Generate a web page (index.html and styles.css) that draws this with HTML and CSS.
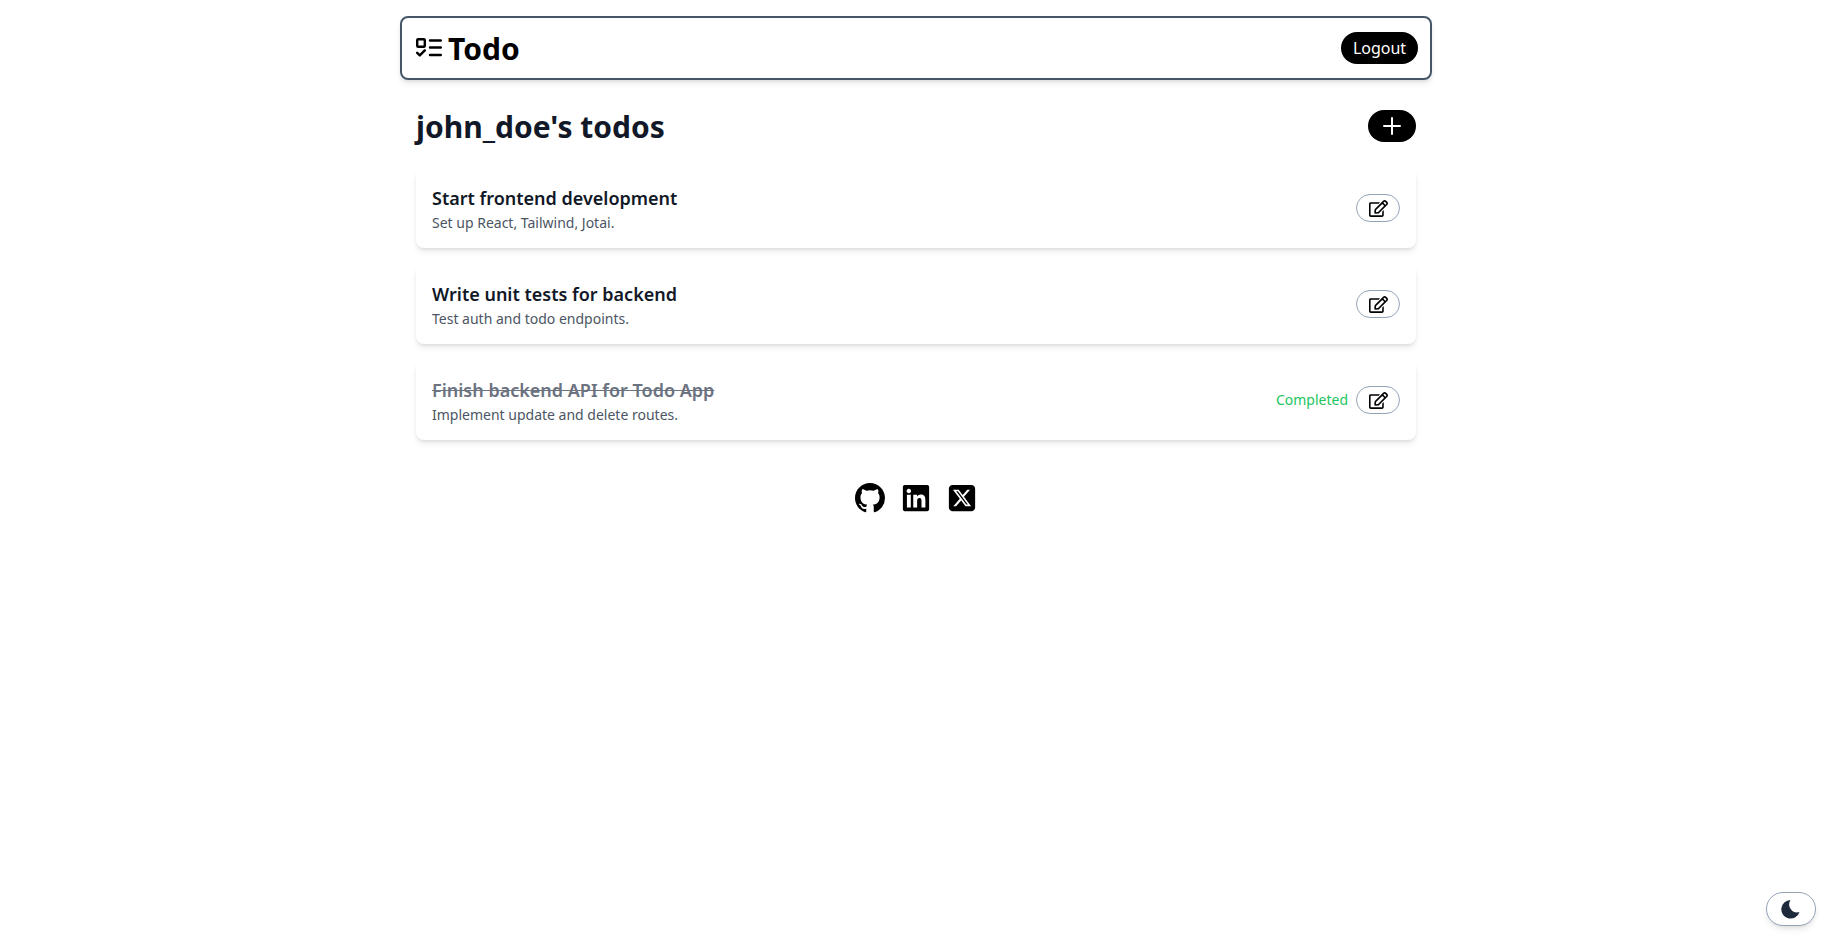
FILE: index.html
```html
<!DOCTYPE html>
<html lang="en">
<head>
<meta charset="utf-8">
<title>Todo</title>
<link rel="stylesheet" href="styles.css">
</head>
<body>
<svg class="sprite" aria-hidden="true"><symbol id="edit" viewBox="0 0 576 512"><path fill="currentColor" d="M402.300 344.900l32-32c5-5 13.700-1.500 13.700 5.700V464c0 26.500-21.500 48-48 48H48c-26.500 0-48-21.500-48-48V112c0-26.500 21.500-48 48-48h273.500c7.100 0 10.700 8.600 5.700 13.700l-32 32c-1.500 1.500-3.500 2.300-5.700 2.300H48v352h352V350.500c0-2.100.8-4.100 2.300-5.600zm156.600-201.800L296.300 405.700l-90.400 10c-26.200 2.900-48.500-19.200-45.600-45.600l10-90.400L432.900 17.100c22.900-22.900 59.900-22.900 82.700 0l43.200 43.200c22.900 22.900 22.900 60 .1 82.800zM460.100 174L402 115.900 216.200 301.800l-7.300 65.300 65.300-7.300L460.100 174zm64.800-79.700l-43.200-43.200c-4.100-4.100-10.800-4.100-14.800 0L436 82l58.100 58.100 30.900-30.900c4-4.200 4-10.800-.1-14.900z"/></symbol></svg>
<div class="page">
  <header class="navbar">
    <div class="brand">
      <svg class="brand-icon" viewBox="0 0 26 20" fill="none" stroke="currentColor" stroke-width="2.400" stroke-linecap="round" stroke-linejoin="round">
        <rect x="1.200" y="1.200" width="7.600" height="7.600" rx="1"/>
        <path d="M1.200 14.800l2.600 2.600 5-5"/>
        <path d="M14 2.500h10.800M14 9.500h10.800M14 17h10.800"/>
      </svg>
      <span class="brand-name">Todo</span>
    </div>
    <button class="btn-dark logout">Logout</button>
  </header>
  <main class="content">
    <div class="title-row">
      <h1 class="title">john_doe's todos</h1>
      <button class="btn-dark add" aria-label="Add">
        <svg viewBox="0 0 24 24" class="plus" fill="none" stroke="currentColor" stroke-width="2" stroke-linecap="round"><path d="M4 12h16M12 4v16"/></svg>
      </button>
    </div>
    <ul class="list">
      <li class="card">
        <div class="card-text">
          <h2 class="card-title">Start frontend development</h2>
          <p class="card-desc">Set up React, Tailwind, Jotai.</p>
        </div>
        <div class="card-actions">
          <button class="btn-edit" aria-label="Edit"><svg class="edit-icon"><use href="#edit"/></svg></button>
        </div>
      </li>
      <li class="card">
        <div class="card-text">
          <h2 class="card-title">Write unit tests for backend</h2>
          <p class="card-desc">Test auth and todo endpoints.</p>
        </div>
        <div class="card-actions">
          <button class="btn-edit" aria-label="Edit"><svg class="edit-icon"><use href="#edit"/></svg></button>
        </div>
      </li>
      <li class="card">
        <div class="card-text">
          <h2 class="card-title done">Finish backend API for Todo App</h2>
          <p class="card-desc">Implement update and delete routes.</p>
        </div>
        <div class="card-actions">
          <span class="status">Completed</span>
          <button class="btn-edit" aria-label="Edit"><svg class="edit-icon"><use href="#edit"/></svg></button>
        </div>
      </li>
    </ul>
    <footer class="social">
      <svg class="social-icon" viewBox="0 0 16 16" fill="currentColor"><path d="M8 0C3.580 0 0 3.580 0 8c0 3.540 2.290 6.530 5.470 7.590.4.070.55-.17.55-.38 0-.19-.01-.82-.01-1.490-2.010.37-2.530-.49-2.690-.94-.09-.23-.48-.94-.82-1.130-.28-.15-.68-.52-.01-.53.63-.01 1.080.58 1.230.82.72 1.210 1.870.87 2.330.66.07-.52.28-.87.51-1.070-1.780-.2-3.640-.89-3.640-3.950 0-.87.31-1.590.82-2.150-.08-.2-.36-1.020.08-2.120 0 0 .67-.21 2.200.82.64-.18 1.320-.27 2-.27.68 0 1.360.09 2 .27 1.530-1.040 2.200-.82 2.200-.82.44 1.100.16 1.920.08 2.120.51.56.82 1.270.82 2.150 0 3.070-1.870 3.750-3.650 3.950.29.25.54.73.54 1.480 0 1.070-.01 1.930-.01 2.200 0 .21.15.46.55.38A8.013 8.013 0 0016 8c0-4.420-3.580-8-8-8z"/></svg>
      <svg class="social-icon" viewBox="0 0 448 512" fill="currentColor"><path d="M416 32H31.900C14.300 32 0 46.500 0 64.300v383.400C0 465.500 14.300 480 31.900 480H416c17.600 0 32-14.500 32-32.300V64.300c0-17.800-14.400-32.300-32-32.300zM135.400 416H69V202.200h66.500V416zm-33.200-243c-21.300 0-38.500-17.300-38.500-38.500S80.900 96 102.200 96c21.200 0 38.500 17.300 38.500 38.500 0 21.300-17.200 38.500-38.500 38.500zm282.100 243h-66.400V312c0-24.800-.5-56.700-34.500-56.700-34.600 0-39.900 27-39.900 54.900V416h-66.400V202.200h63.700v29.200h.9c8.900-16.800 30.600-34.500 62.900-34.500 67.200 0 79.700 44.300 79.700 101.900V416z"/></svg>
      <svg class="social-icon" viewBox="0 0 448 512" fill="currentColor"><path d="M64 32C28.700 32 0 60.700 0 96V416c0 35.300 28.700 64 64 64H384c35.300 0 64-28.700 64-64V96c0-35.300-28.700-64-64-64H64zm297.100 84L257.300 234.600 379.400 396H283.800L209 298.100 123.300 396H75.800l111-126.900L69.700 116h98l67.700 89.500L313.600 116h47.500zM323.300 367.600L153.400 142.900H125.100L296.900 367.600h26.400z"/></svg>
    </footer>
  </main>
</div>
<button class="theme-toggle" aria-label="Toggle theme">
  <svg class="moon" viewBox="0 0 20 20" fill="currentColor"><path d="M9.500 1A9.300 9.300 0 1 0 18.500 13A8 8 0 0 1 9.500 1Z"/></svg>
</button>
</body>
</html>
```
FILE: styles.css
```css
* { box-sizing: border-box; }
html, body { margin: 0; padding: 0; }
body {
  background: #fff;
  font-family: "Noto Sans", sans-serif;
  color: #111827;
}
button { font-family: inherit; cursor: pointer; }
.sprite { display: none; }
.page {
  width: 1032px;
  margin: 0 auto;
  padding-top: 16px;
}
.navbar {
  height: 64px;
  border: 2px solid #475569;
  border-radius: 8px;
  padding: 0 12px 0 14px;
  display: flex;
  align-items: center;
  justify-content: space-between;
  box-shadow: 0 4px 6px -1px rgba(0,0,0,.1), 0 2px 4px -2px rgba(0,0,0,.1);
}
.brand { display: flex; align-items: center; gap: 6px; color: #000; }
.brand-icon { width: 26px; height: 20px; display: block; }
.brand-name { font-size: 30px; line-height: 36px; font-weight: 700; padding-top: 2px; }
.btn-dark {
  background: #000;
  color: #fff;
  border: 0;
  border-radius: 16px;
  height: 32px;
}
.logout { width: 77px; font-size: 16px; padding: 0; }
.content { padding: 0 16px; }
.title-row {
  display: flex;
  justify-content: space-between;
  align-items: center;
  margin-top: 30px;
  height: 32px;
}
.title { margin: 2px 0 0; font-size: 30px; line-height: 36px; font-weight: 700; color: #111827; }
.add { width: 48px; display: flex; align-items: center; justify-content: center; padding: 0; }
.plus { width: 24px; height: 24px; display: block; }
.list { list-style: none; margin: 26px 0 0; padding: 0; display: flex; flex-direction: column; gap: 16px; }
.card {
  height: 80px;
  background: #fff;
  border-radius: 8px;
  padding: 0 16px;
  display: flex;
  align-items: center;
  justify-content: space-between;
  box-shadow: 0 4px 6px -1px rgba(0,0,0,.1), 0 2px 4px -2px rgba(0,0,0,.1);
}
.card-text { padding-top: 1px; }
.card-title { margin: 0; font-size: 18px; line-height: 28px; font-weight: 600; color: #111827; }
.card-title.done { color: #6b7280; text-decoration: line-through; }
.card-desc { margin: 0; font-size: 14px; line-height: 21px; color: #4b5563; }
.card-actions { display: flex; align-items: center; gap: 8px; }
.status { font-size: 14px; line-height: 20px; color: #22c55e; }
.btn-edit {
  width: 44px;
  height: 28px;
  padding: 0;
  background: #fff;
  border: 1px solid #94a3b8;
  border-radius: 14px;
  color: #000;
  display: flex;
  align-items: center;
  justify-content: center;
}
.edit-icon { width: 19px; height: 19px; display: block; }
.social {
  display: flex;
  justify-content: center;
  gap: 16px;
  margin-top: 43px;
  color: #000;
}
.social-icon { width: 30px; height: 30px; display: block; }
.theme-toggle {
  position: fixed;
  right: 16px;
  bottom: 16px;
  width: 50px;
  height: 34px;
  padding: 0;
  background: #fff;
  border: 1px solid #94a3b8;
  border-radius: 17px;
  color: #1e293b;
  display: flex;
  align-items: center;
  justify-content: center;
  box-shadow: 0 4px 6px -1px rgba(0,0,0,.1), 0 2px 4px -2px rgba(0,0,0,.1);
}
.moon { width: 20px; height: 20px; display: block; }
```
